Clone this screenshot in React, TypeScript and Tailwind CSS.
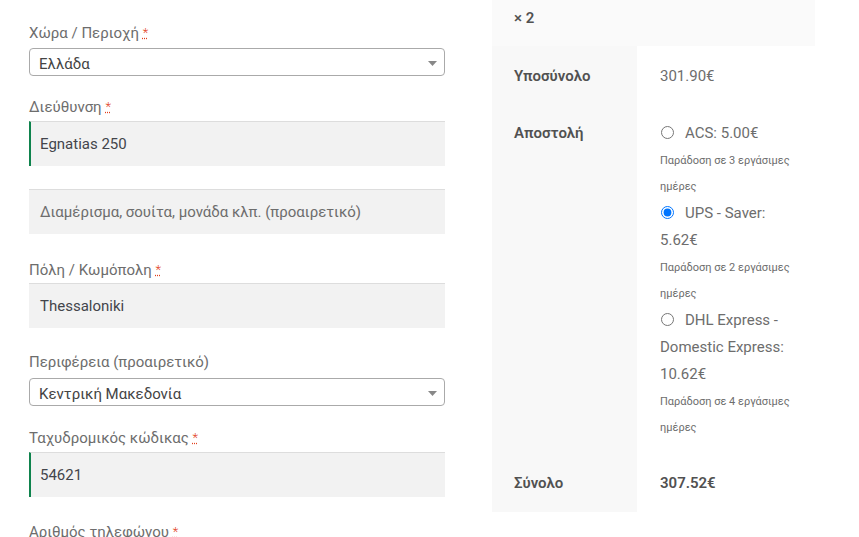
import React from 'react';

const Req = () => (
  <>
    {' '}
    <abbr
      className="text-[#e2401c] text-[13px] font-light [text-decoration-line:underline] [text-decoration-style:dotted] align-[1px]"
      title="required"
    >
      *
    </abbr>
  </>
);

const Caret = () => (
  <svg width="9" height="5" viewBox="0 0 9 5" className="absolute right-[7px] top-[12px]">
    <path d="M0 0h9L4.5 5z" fill="#888" />
  </svg>
);

function Select({ value }: { value: string }) {
  return (
    <div className="relative h-[28px] rounded-[4px] border border-[#aaa] bg-white pl-[9px] pt-[3px] text-[15px] leading-[24px] text-[#444]">
      {value}
      <Caret />
    </div>
  );
}

function Field({ value, valid, placeholder }: { value?: string; valid?: boolean; placeholder?: string }) {
  return (
    <div
      className={
        'h-[45px] bg-[#f2f2f2] border-t border-t-[#ddd] flex items-center text-[15px] ' +
        (valid ? 'border-l-2 border-l-[#0f834d] pl-[9px]' : 'pl-[11px]')
      }
    >
      {value ? <span className="text-[#43454b]">{value}</span> : <span className="text-[#6d6d6d]">{placeholder}</span>}
    </div>
  );
}

const Label = ({ children }: { children: React.ReactNode }) => (
  <div className="text-[15px] leading-[24px] pt-[2px] text-[#6d6d6d]">{children}</div>
);

type Rate = { lines: string; note: string; checked?: boolean };

const rates: Rate[] = [
  { lines: 'ACS: 5.00€', note: 'Παράδοση σε 3 εργάσιμες ημέρες' },
  { lines: 'UPS - Saver: 5.62€', note: 'Παράδοση σε 2 εργάσιμες ημέρες', checked: true },
  { lines: 'DHL Express - Domestic Express: 10.62€', note: 'Παράδοση σε 4 εργάσιμες ημέρες' },
];

export default function App() {
  return (
    <div
      className="w-[859px] h-[537px] overflow-hidden bg-white flex items-start"
      style={{ fontFamily: 'Roboto, "Noto Sans", sans-serif' }}
    >
      {/* Billing form */}
      <div className="ml-[29px] w-[416px] pt-[19px] flex flex-col">
        <Label>
          Χώρα / Περιοχή<Req />
        </Label>
        <div className="mt-[3px]">
          <Select value="Ελλάδα" />
        </div>

        <div className="mt-[17px]">
          <Label>
            Διεύθυνση<Req />
          </Label>
        </div>
        <div className="mt-[2px]">
          <Field value="Egnatias 250" valid />
        </div>
        <div className="mt-[23px]">
          <Field placeholder="Διαμέρισμα, σουίτα, μονάδα κλπ. (προαιρετικό)" />
        </div>

        <div className="mt-[22px]">
          <Label>
            Πόλη / Κωμόπολη<Req />
          </Label>
        </div>
        <div className="mt-[1px]">
          <Field value="Thessaloniki" />
        </div>

        <div className="mt-[20px]">
          <Label>Περιφέρεια (προαιρετικό)</Label>
        </div>
        <div className="mt-[4px]">
          <Select value="Κεντρική Μακεδονία" />
        </div>

        <div className="mt-[18px]">
          <Label>
            Ταχυδρομικός κώδικας<Req />
          </Label>
        </div>
        <div className="mt-[2px]">
          <Field value="54621" valid />
        </div>

        <div className="mt-[21px]">
          <Label>
            Αριθμός τηλεφώνου<Req />
          </Label>
        </div>
      </div>

      {/* Order review */}
      <div className="ml-[47px] w-[323px] text-[15px] text-[#6d6d6d]">
        <div className="h-[46px] bg-[#fafafa] pl-[22px] pt-[5px] leading-[26px] font-semibold text-[#515151]">× 2</div>

        <div className="flex">
          <div className="w-[145px] shrink-0 bg-[#f8f8f8] px-[22px] pt-[17px] pb-[15px] leading-[26px] font-semibold text-[#515151]">Υποσύνολο</div>
          <div className="flex-1 px-[23px] pt-[17px] pb-[15px] leading-[26px]">301.90€</div>
        </div>

        <div className="flex">
          <div className="w-[145px] shrink-0 bg-[#f8f8f8] px-[22px] py-[16px] leading-[26px] font-semibold text-[#515151]">Αποστολή</div>
          <ul className="flex-1 px-[23px] pt-[16px] pb-[13px]">
            {rates.map((r) => (
              <li key={r.lines}>
                <div className="leading-[27px]">
                  <input
                    type="radio"
                    name="ship"
                    defaultChecked={r.checked}
                    className="m-0 ml-[1px] mr-[11px] align-[-1px] h-[13px] w-[13px]"
                  />
                  {r.lines}
                </div>
                <div className="text-[11px] leading-[26px] pt-[1px] pr-[2px]">{r.note}</div>
              </li>
            ))}
          </ul>
        </div>

        <div className="flex">
          <div className="w-[145px] shrink-0 bg-[#f8f8f8] px-[22px] py-[16px] leading-[26px] font-semibold text-[#515151]">Σύνολο</div>
          <div className="flex-1 px-[23px] py-[16px] leading-[26px] font-semibold text-[#515151]">307.52€</div>
        </div>
      </div>
    </div>
  );
}
